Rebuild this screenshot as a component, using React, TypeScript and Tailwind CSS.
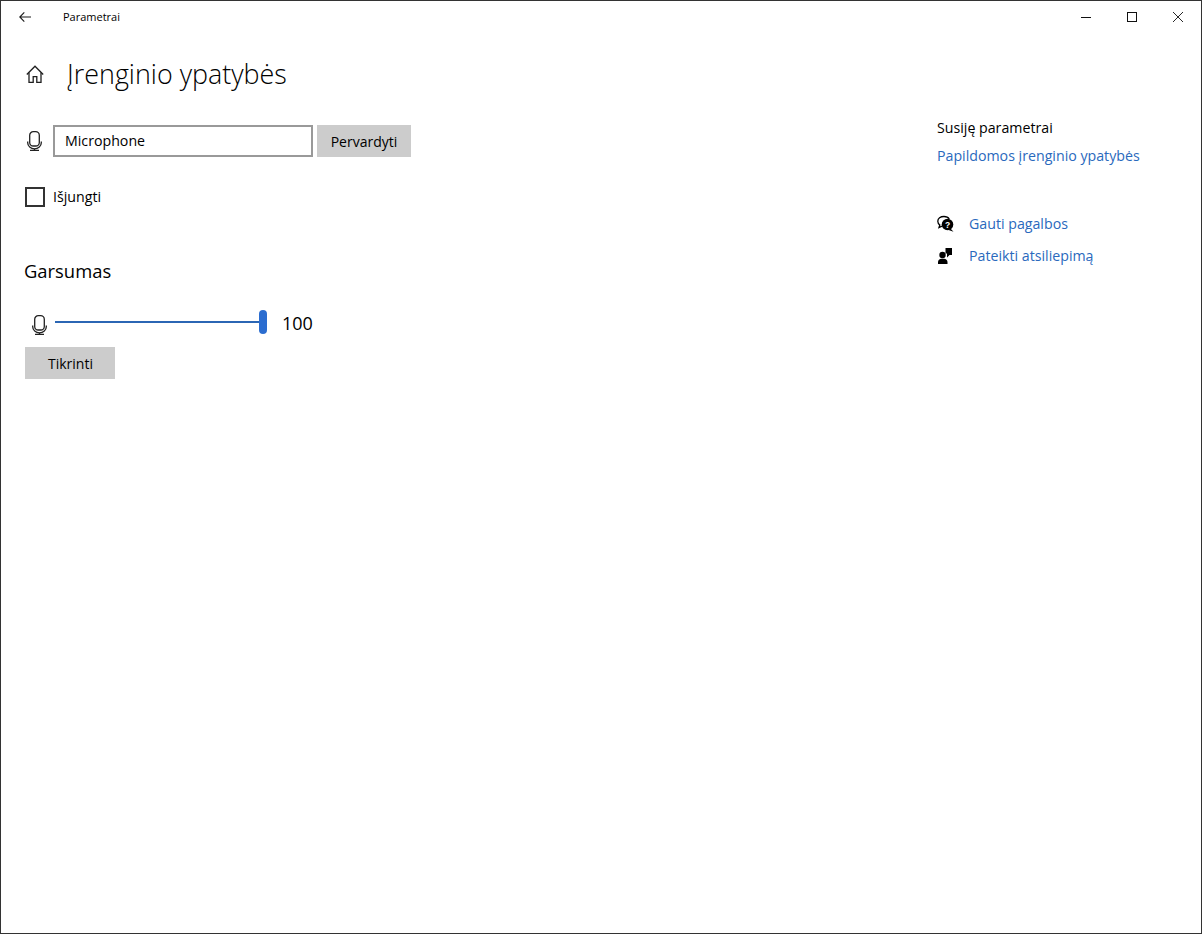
function MicIcon({ className }: { className: string }) {
  return (
    <svg viewBox="0 0 15 20" fill="none" stroke="#222" strokeWidth="1.3" className={className}>
      <rect x="2.700" y="0.700" width="9.600" height="14.300" rx="3.600" />
      <path d="M0.700 10.500v1.300a6.800 6 0 0 0 13.600 0v-1.300" />
      <path d="M7.500 17.800v1.600M3 19.400h9" />
    </svg>
  );
}

function HomeIcon() {
  return (
    <svg viewBox="0 0 18 18" fill="none" stroke="#1f1f1f" strokeWidth="1.300" className="w-[18px] h-[18px]">
      <path d="M0.800 9.500 9 1.200l8.200 8.300" />
      <path d="M3 7.500v9.800h4.200v-5.600h3.600v5.600H15V7.500" />
    </svg>
  );
}

function HelpIcon() {
  return (
    <svg viewBox="0 0 18 18" className="w-[18px] h-[18px]">
      <path d="M7 1.500C3.400 1.500.8 3.500.8 6.200c0 1.500.8 2.800 2 3.700L2 12.500l3-1.400" fill="none" stroke="#000" strokeWidth="1.300" />
      <path d="M7 1.500c2.300 0 4.300 1 5.300 2.500" fill="none" stroke="#000" strokeWidth="1.300" />
      <circle cx="10.500" cy="9.500" r="5.800" fill="#000" />
      <path d="M13.500 13.500l3 3.300-5-1.800z" fill="#000" />
      <text x="10.500" y="12.500" textAnchor="middle" fontSize="8.500" fontWeight="700" fill="#fff" fontFamily="'Liberation Sans', sans-serif">?</text>
    </svg>
  );
}

function FeedbackIcon() {
  return (
    <svg viewBox="0 0 18 18" className="w-[18px] h-[18px]">
      <circle cx="5.500" cy="8" r="3.200" fill="#000" />
      <path d="M1 17v-2c0-2 1.600-3.300 3.400-3.300h2.700c1.800 0 3.400 1.300 3.400 3.300v2z" fill="#000" />
      <path d="M8.500 1H15v7h-2.500L10 10.500V6.500H8.500z" fill="#000" />
    </svg>
  );
}

export default function App() {
  return (
    <div className="w-[1202px] h-[934px] bg-white border border-[#333] flex flex-col text-black overflow-hidden font-['Open_Sans',sans-serif]">
      {/* Title bar */}
      <div className="h-[32px] flex items-center shrink-0">
        <svg viewBox="0 0 12 10" fill="none" stroke="#1a1a1a" strokeWidth="1.100" className="w-[12px] h-[10px] ml-[18px]">
          <path d="M12 5H0.800M5.300 0.400 0.800 5l4.500 4.600" />
        </svg>
        <span className="ml-[32px] text-[11px]">Parametrai</span>
        <div className="ml-auto flex">
          <div className="w-[46px] h-[32px] flex items-center justify-center">
            <svg viewBox="0 0 10 10" stroke="#111" strokeWidth="1" className="w-[10px] h-[10px]"><path d="M0 5.500h10" /></svg>
          </div>
          <div className="w-[46px] h-[32px] flex items-center justify-center">
            <svg viewBox="0 0 10 10" fill="none" stroke="#111" strokeWidth="1" className="w-[10px] h-[10px]"><rect x="0.500" y="0.500" width="9" height="9" /></svg>
          </div>
          <div className="w-[46px] h-[32px] flex items-center justify-center">
            <svg viewBox="0 0 10 10" stroke="#111" strokeWidth="0.900" className="w-[10px] h-[10px]"><path d="M0 0l10 10M10 0 0 10" /></svg>
          </div>
        </div>
      </div>

      <div className="flex flex-1">
        {/* Main column */}
        <div className="flex-1 pl-[24px]">
          <div className="flex items-center h-[40px] mt-[21px]">
            <div className="ml-[1px]"><HomeIcon /></div>
            <h1 className="ml-[23px] text-[26.900px] font-light leading-[40px]">Įrenginio ypatybės</h1>
          </div>

          <div className="flex items-center mt-[31px] h-[32px]">
            <MicIcon className="w-[15px] h-[20px] ml-[2px]" />
            <div className="ml-[11px] w-[260px] h-[32px] border-2 border-[#999] flex items-center pl-[10px] text-[14.200px]">
              Microphone
            </div>
            <button className="ml-[4px] w-[94px] h-[32px] bg-[#ccc] text-[14px]">Pervardyti</button>
          </div>

          <div className="flex items-center mt-[30px] h-[20px]">
            <div className="w-[20px] h-[20px] border-2 border-[#333]" />
            <span className="ml-[8px] text-[14.200px]">Išjungti</span>
          </div>

          <h2 className="mt-[52px] ml-[-1px] text-[18.400px] leading-[24px]">Garsumas</h2>

          <div className="flex items-center mt-[27px] h-[24px] ml-[7px]">
            <MicIcon className="w-[15px] h-[20px] mt-[6px]" />
            <div className="ml-[8px] w-[212px] h-[24px] flex items-center">
              <div className="flex-1 h-[2px] bg-[#2b66b4]" />
              <div className="w-[8px] h-[24px] rounded-full bg-[#2b6dd0]" />
            </div>
            <span className="ml-[15px] mt-[2px] text-[18px]">100</span>
          </div>

          <button className="block mt-[13px] w-[90px] h-[32px] pl-[1px] bg-[#ccc] text-[14px]">Tikrinti</button>
        </div>

        {/* Related settings */}
        <div className="w-[264px] pt-[83px] text-[14.200px] shrink-0">
          <div className="leading-[24px]">Susiję parametrai</div>
          <a className="block mt-[4px] leading-[24px] text-[#2a69bd]">Papildomos įrenginio ypatybės</a>
          <div className="flex items-center mt-[44px] h-[24px] text-[#2a69bd]">
            <HelpIcon />
            <span className="ml-[14px]">Gauti pagalbos</span>
          </div>
          <div className="flex items-center mt-[8px] h-[24px] text-[#2a69bd]">
            <FeedbackIcon />
            <span className="ml-[14px]">Pateikti atsiliepimą</span>
          </div>
        </div>
      </div>
    </div>
  );
}
